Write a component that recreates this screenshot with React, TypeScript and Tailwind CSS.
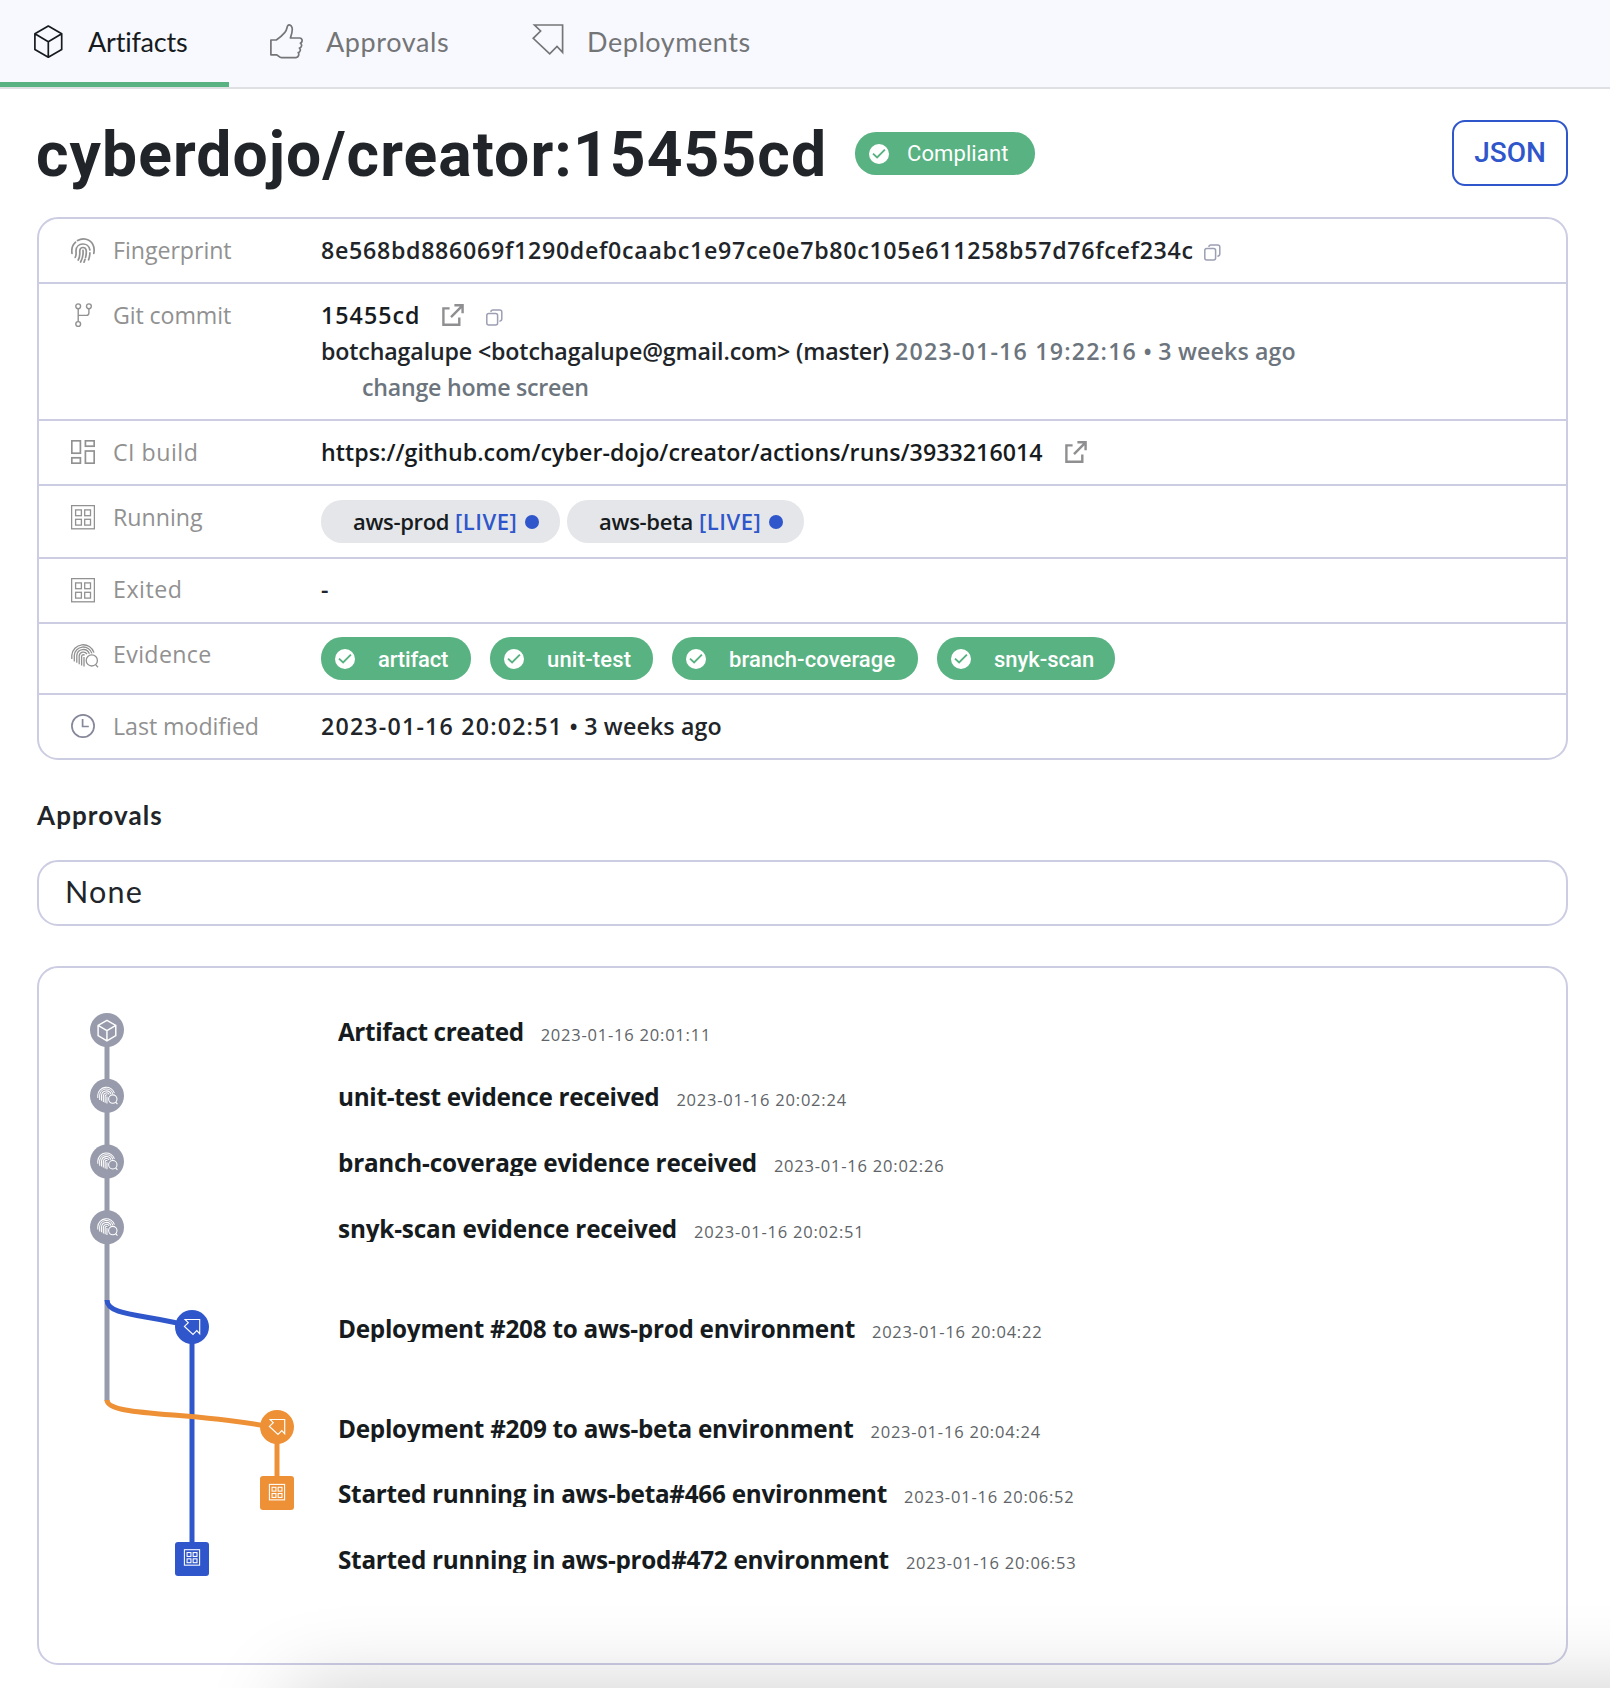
import type { ReactNode } from "react";

/* ---------- icon shapes, drawn in local coordinates ---------- */

const CubeShape = () => <path d="M14.3 1 27.7 8.7V24.4L14.3 32.2.9 24.4V8.7ZM.9 8.7l13.4 8 13.4-8M14.3 16.7V32.2" />;

const DeployShape = () => <path d="M2.5 1H30.6V28.3L25 22.4 17.7 29.8 1.2 14.3 8.6 7Z" />;

const EvidenceShape = () => (
  <>
    <path d="M.8 16V12.2A11.4 11.4 0 0 1 23 9.6M3.3 18.6V12.4A9 9 0 0 1 20.9 10.4M5.8 19.8V12.6A6.5 6.5 0 0 1 18.4 10.8M8.2 21.2V12.8A4.2 4.2 0 0 1 16 11.2M10.6 22.4V13.1A1.9 1.9 0 0 1 13.6 12.2M13 23.4V14" />
    <circle cx="20.8" cy="17.4" r="5.6" />
    <path d="M24.6 21.6 27 24.2" />
  </>
);

const GridShape = () => (
  <>
    <rect x=".6" y=".6" width="22.8" height="23.2" />
    <rect x="4.6" y="4.9" width="5.8" height="5.8" />
    <rect x="13.7" y="4.9" width="5.8" height="5.8" />
    <rect x="4.6" y="14.3" width="5.8" height="5.8" />
    <rect x="13.7" y="14.3" width="5.8" height="5.8" />
  </>
);

/* ---------- stand-alone icons ---------- */

const CubeIcon = () => (
  <svg width="29" height="33" viewBox="0 0 29 33" fill="none" stroke="currentColor" strokeWidth="1.7" strokeLinejoin="round">
    <CubeShape />
  </svg>
);

const ThumbIcon = () => (
  <svg width="33" height="35" viewBox="0 0 33 35" fill="none" stroke="currentColor" strokeWidth="1.7" strokeLinejoin="round">
    <path d="M.9 16H6.3C9.5 14 12.5 11.2 14.9 8.4 17 6.3 16.7 3.6 17.6 1.9 18.8.2 21.2.9 22 3.4 23 6.5 21.6 10.5 20.4 14H29.6C32.6 14.2 33 17.8 30.4 19.2 32.4 20.4 31.8 23.6 29.4 24 31 25.4 30.4 28 28.2 28.6 29.4 30.2 28.6 33.4 26 33.6H11.5C9 33.6 8.4 31.2 6.4 30.8H.9Z" />
  </svg>
);

const DeployIcon = () => (
  <svg width="32" height="31" viewBox="0 0 32 31" fill="none" stroke="currentColor" strokeWidth="1.7">
    <DeployShape />
  </svg>
);

const FingerprintIcon = () => (
  <svg width="24" height="25" viewBox="0 0 24 25" fill="none" stroke="currentColor" strokeWidth="1.7" strokeLinecap="round">
    <path d="M6.6 2.6C12 -.6 19 1 21.8 6.4 23.2 9 23.4 12.4 22.8 15.4M4.6 4.2C1.4 7 .3 11 1 15.4M4.2 19.4C5.6 17 5 15 5 12.6 5.4 4.2 17.6 3.6 18.9 12M18.9 14.8C18.9 17.4 18.4 19.4 17.6 21.8M7.2 22C9.4 18.6 8.6 15.6 8.8 12.4 9.4 8.6 14.4 8.6 15.2 12.2 15.5 15 15.2 17 14.6 19.4M12 12.4C12.4 17 11.6 20.6 9.6 24M14 21.4 13 24.2" />
  </svg>
);

const GitIcon = () => (
  <svg width="24" height="25" viewBox="-4 0 24 25" fill="none" stroke="currentColor" strokeWidth="1.4">
    <circle cx="3.2" cy="3.3" r="2.4" />
    <circle cx="13.9" cy="3.3" r="2.4" />
    <circle cx="3.2" cy="21" r="2.4" />
    <path d="M3.2 5.7V18.6M13.9 5.7V10Q13.9 12.4 11.4 12.4H3.2" />
  </svg>
);

const BuildIcon = () => (
  <svg width="24" height="24" viewBox="0 0 24 24" fill="none" stroke="currentColor" strokeWidth="1.7">
    <rect x=".8" y=".8" width="8.6" height="12.4" />
    <rect x="14.4" y=".8" width="8.8" height="5.4" />
    <rect x=".8" y="17.8" width="8.6" height="5.4" />
    <rect x="14.4" y="11" width="8.8" height="12.2" />
  </svg>
);

const GridIcon = () => (
  <svg width="24" height="25" viewBox="0 0 24 25" fill="none" stroke="currentColor" strokeWidth="1.3">
    <GridShape />
  </svg>
);

const EvidenceIcon = () => (
  <svg width="28" height="25" viewBox="0 0 28 25" fill="none" stroke="currentColor" strokeWidth="1.3">
    <EvidenceShape />
  </svg>
);

const ClockIcon = () => (
  <svg className="text-[#85879a]" width="24" height="24" viewBox="0 0 24 24" fill="none" stroke="currentColor" strokeWidth="1.7">
    <circle cx="12" cy="12" r="11.1" />
    <path d="M11.6 5V12.5H17.8" />
  </svg>
);

const ExternalIcon = () => (
  <svg className="shrink-0 text-[#8f8f91]" width="22" height="22" viewBox="0 0 22 22" fill="none" stroke="currentColor" strokeWidth="2.4">
    <path d="M7.6 4.4H1.4V20.8H17.3V13.6M12.4 1.3H20.6V9.2M9 13.2 20.4 1.6" />
  </svg>
);

const CopyIcon = () => (
  <svg className="shrink-0 text-[#9c9eb2]" width="17" height="17" viewBox="0 0 17 17" fill="none" stroke="currentColor" strokeWidth="1.5">
    <rect x=".8" y="4.6" width="10.8" height="11.4" rx="2" />
    <path d="M4.8 2.8Q5 .9 7 .9H13.6Q15.8.9 15.8 3V9.8Q15.8 12 13.4 12.2" />
  </svg>
);

const CheckIcon = () => (
  <svg className="shrink-0" width="20" height="20" viewBox="0 0 20 20" fill="none">
    <circle cx="10" cy="10" r="10" fill="white" />
    <path d="M4 9.6 8.1 13.5 15.9 5.6" stroke="#59b282" strokeWidth="1.9" />
  </svg>
);

/* ---------- summary table ---------- */

function Row({ icon, label, className, children }: { icon: ReactNode; label: ReactNode; className: string; children: ReactNode }) {
  return (
    <div className={`flex items-start border-[#cccde3] pl-8 ${className}`}>
      <div className="flex w-[250px] shrink-0 text-[#919191]">
        <div className="w-[42px] pt-[6px]">{icon}</div>
        <div className="text-[23.2px] leading-9">{label}</div>
      </div>
      <div className="text-[23.2px] leading-9 font-semibold text-[#212529]">{children}</div>
    </div>
  );
}

function EnvPill({ className, name }: { className: string; name: ReactNode }) {
  return (
    <div className={`flex h-[43px] items-center rounded-[21px] bg-[#e5e6e9] pb-px pl-8 text-[22px] ${className}`}>
      <span className="text-[#161b20]">{name}</span>
      <span className="ml-[6px] tracking-[0.5px] text-[#2f56cb]">[LIVE]</span>
      <span className="mt-px ml-2 size-[14px] rounded-full bg-[#2f56cb]" />
    </div>
  );
}

function EvidencePill({ className, children }: { className: string; children: ReactNode }) {
  return (
    <div className={`flex h-[43px] items-center rounded-[21px] bg-[#59b282] pl-[14px] font-[Roboto,sans-serif] text-[22px] font-medium text-white ${className}`}>
      <CheckIcon />
      <span className="ml-[23px] pt-[2px]">{children}</span>
    </div>
  );
}

function Timestamp({ date, age }: { date: string; age: string }) {
  return (
    <>
      <span className="tracking-[1.2px]">{date}</span>
      <span className="tracking-[0.15px]"> • {age}</span>
    </>
  );
}

/* ---------- timeline ---------- */

const events = [
  { title: "Artifact created", time: "2023-01-16 20:01:11", cls: "tracking-[-0.4px]" },
  { title: "unit-test evidence received", time: "2023-01-16 20:02:24", cls: "mt-[39.7px] tracking-[-0.29px]" },
  { title: "branch-coverage evidence received", time: "2023-01-16 20:02:26", cls: "mt-[39.7px] tracking-[-0.24px]" },
  { title: "snyk-scan evidence received", time: "2023-01-16 20:02:51", cls: "mt-[39.7px] tracking-[-0.18px]" },
  { title: "Deployment #208 to aws-prod environment", time: "2023-01-16 20:04:22", cls: "mt-[74px] tracking-[-0.27px]" },
  { title: "Deployment #209 to aws-beta environment", time: "2023-01-16 20:04:24", cls: "mt-[74px] tracking-[-0.26px]" },
  { title: "Started running in aws-beta#466 environment", time: "2023-01-16 20:06:52", cls: "mt-[39.7px] tracking-[-0.27px]" },
  { title: "Started running in aws-prod#472 environment", time: "2023-01-16 20:06:53", cls: "mt-[39.7px] tracking-[-0.27px]" },
];

const TimelineGraph = () => (
  <svg className="shrink-0" width="299" height="695" viewBox="39 968 299 695" fill="none" strokeWidth="5">
    <path d="M107 1030V1401" stroke="#989bab" />
    <path d="M192 1327V1559" stroke="#2f56cb" />
    <path d="M277 1427V1493" stroke="#ee9035" />
    <path d="M107 1300C107 1317 150 1314 192 1327" stroke="#2f56cb" />
    <path d="M107 1400C107 1417 192 1411 277 1428" stroke="#ee9035" />
    {[1030, 1095.8, 1161.5, 1227.3].map((y) => (
      <circle key={y} cx="107" cy={y} r="17" fill="#989bab" />
    ))}
    <circle cx="192" cy="1327" r="17" fill="#2f56cb" />
    <circle cx="277" cy="1427" r="17" fill="#ee9035" />
    <rect x="260" y="1476" width="34" height="34" rx="3" fill="#ee9035" />
    <rect x="175" y="1542" width="34" height="34" rx="3" fill="#2f56cb" />
    <g stroke="white">
      <g transform="translate(97.5 1019.6) scale(.66)" strokeWidth="2.2">
        <CubeShape />
      </g>
      {[1086, 1151.7, 1217.5].map((y) => (
        <g key={y} transform={`translate(97.2 ${y}) scale(.75)`} strokeWidth="1.4">
          <EvidenceShape />
        </g>
      ))}
      <g transform="translate(183.8 1319) scale(.52)" strokeWidth="2.2">
        <DeployShape />
      </g>
      <g transform="translate(268.8 1419) scale(.52)" strokeWidth="2.2">
        <DeployShape />
      </g>
      <g transform="translate(269 1484) scale(.667)" strokeWidth="1.6">
        <GridShape />
      </g>
      <g transform="translate(184 1549.3) scale(.667)" strokeWidth="1.6">
        <GridShape />
      </g>
    </g>
  </svg>
);

const tab = "flex h-full items-center border-b-[5px] text-[27px] leading-9";

export default function App() {
  return (
    <div className="relative h-[1688px] w-[1610px] overflow-hidden bg-white font-['Open_Sans',sans-serif] text-[#212529]">
      <nav className="flex h-[89px] border-b-2 border-[#dfe0e3] bg-[#f8f9fe] font-[Lato,sans-serif] text-[#747577]">
        <div className={`${tab} w-[229px] border-[#59b282] pl-[34px] text-[#161b20]`}>
          <CubeIcon />
          <span className="ml-[25px] pt-[2px] tracking-[-0.2px]">Artifacts</span>
        </div>
        <div className={`${tab} w-[262px] border-transparent pl-[41px]`}>
          <ThumbIcon />
          <span className="ml-[23px] pt-[2px] tracking-[0.61px]">Approvals</span>
        </div>
        <div className={`${tab} border-transparent pl-[41px]`}>
          <div className="pb-1">
            <DeployIcon />
          </div>
          <span className="ml-[23px] pt-[2px] tracking-[0.55px]">Deployments</span>
        </div>
      </nav>

      <main className="pt-[31px] pr-[42px] pl-[37px]">
        <div className="flex h-[66px] items-start">
          <h1 className="-ml-px w-[819px] pt-[2px] font-[Roboto,sans-serif] text-[62.4px] leading-[66px] font-bold tracking-[1.07px]">cyberdojo/creator:15455cd</h1>
          <div className="mt-3 flex h-[43px] w-[180px] items-center rounded-[21px] bg-[#59b282] pl-[14px] font-[Roboto,sans-serif] text-[22px] text-white">
            <CheckIcon />
            <span className="ml-[18px] tracking-[0.1px]">Compliant</span>
          </div>
          <button className="ml-auto flex h-[66px] w-[116px] items-center justify-center rounded-[13px] border-2 border-[#2f56cb] font-[Roboto,sans-serif] text-[28px] font-medium text-[#2f56cb]">
            JSON
          </button>
        </div>

        <section className="mt-[31px] rounded-[21px] border-2 border-[#cccde3]">
          <Row icon={<FingerprintIcon />} label={<span className="tracking-[-0.05px]">Fingerprint</span>} className="border-b-2 pt-[13px] pb-[14px]">
            <div className="flex items-center">
              <span className="tracking-[0.7px]">8e568bd886069f1290def0caabc1e97ce0e7b80c105e611258b57d76fcef234c</span>
              <span className="ml-[10px] pt-[5px]">
                <CopyIcon />
              </span>
            </div>
          </Row>
          <Row icon={<GitIcon />} label={<span className="tracking-[-0.1px]">Git commit</span>} className="border-b-2 pt-[13px] pb-[14px]">
            <div className="flex items-center text-[#161b20]">
              <span className="tracking-[1.05px]">15455cd</span>
              <span className="ml-[21px]">
                <ExternalIcon />
              </span>
              <span className="ml-[22px] pt-1">
                <CopyIcon />
              </span>
            </div>
            <div className="flex">
              <span className="tracking-[-0.14px]">botchagalupe &lt;botchagalupe@gmail.com&gt; (master)</span>
              <span className="ml-[6px] whitespace-pre text-[#6c757d]">
                <Timestamp date="2023-01-16 19:22:16" age="3 weeks ago" />
              </span>
            </div>
            <div className="pl-[41px] tracking-[-0.25px] text-[#6c757d]">change home screen</div>
          </Row>
          <Row icon={<BuildIcon />} label={<span className="tracking-[0.5px]">CI build</span>} className="border-b-2 pt-[13px] pb-[14px]">
            <div className="flex items-center text-[#161b20]">
              <span className="tracking-[0.04px]">https://github.com/cyber-dojo/creator/actions/runs/3933216014</span>
              <span className="ml-[22px]">
                <ExternalIcon />
              </span>
            </div>
          </Row>
          <Row icon={<GridIcon />} label="Running" className="border-b-2 pt-[13px] pb-[14px]">
            <div className="mt-px flex gap-[7px]">
              <EnvPill className="w-[239px]" name={<span className="tracking-[-0.34px]">aws-prod</span>} />
              <EnvPill className="w-[237px]" name={<span className="tracking-[-0.28px]">aws-beta</span>} />
            </div>
          </Row>
          <Row
            icon={
              <div className="pt-px">
                <GridIcon />
              </div>
            }
            label={<span className="tracking-[0.5px]">Exited</span>}
            className="border-b-2 pt-3 pb-[15px]"
          >
            -
          </Row>
          <Row
            icon={
              <div className="pt-px">
                <EvidenceIcon />
              </div>
            }
            label={<span className="tracking-[0.35px]">Evidence</span>}
            className="border-b-2 pt-3 pb-[13px]"
          >
            <div className="mt-px flex gap-[19px]">
              <EvidencePill className="w-[150px] tracking-[-0.17px]">artifact</EvidencePill>
              <EvidencePill className="w-[163px] tracking-[0.18px]">unit-test</EvidencePill>
              <EvidencePill className="w-[246px] tracking-[0.09px]">branch-coverage</EvidencePill>
              <EvidencePill className="w-[178px]">snyk-scan</EvidencePill>
            </div>
          </Row>
          <Row icon={<ClockIcon />} label={<span className="tracking-[-0.05px]">Last modified</span>} className="pt-[13px] pb-[14px]">
            <Timestamp date="2023-01-16 20:02:51" age="3 weeks ago" />
          </Row>
        </section>

        <h2 className="mt-[37px] font-[Lato,sans-serif] text-[26px] leading-9 font-bold tracking-[1.1px]">Approvals</h2>

        <div className="mt-[27px] flex h-[66px] items-center rounded-[21px] border-2 border-[#cccde3] pb-[2px] pl-[26px] font-[Lato,sans-serif] text-[30.5px] tracking-[1.2px]">
          None
        </div>

        <section className="mt-10 flex h-[699px] rounded-[21px] border-2 border-[#cccde3]">
          <TimelineGraph />
          <ol className="pt-[50.5px]">
            {events.map((e) => (
              <li key={e.title} className={`flex h-[26px] items-baseline overflow-hidden text-[24.3px] leading-[25px] font-bold text-[#161b20] ${e.cls}`}>
                <span>{e.title}</span>
                <time className="ml-[17px] text-[16.5px] font-normal tracking-[0.78px] text-[#606468]">{e.time}</time>
              </li>
            ))}
          </ol>
        </section>
      </main>

      {/* soft shadow rising from below the page */}
      <div className="pointer-events-none absolute top-[1690px] -right-[200px] left-[290px] h-[300px] shadow-[0_0_80px_rgba(0,0,0,0.2)]" />
    </div>
  );
}
